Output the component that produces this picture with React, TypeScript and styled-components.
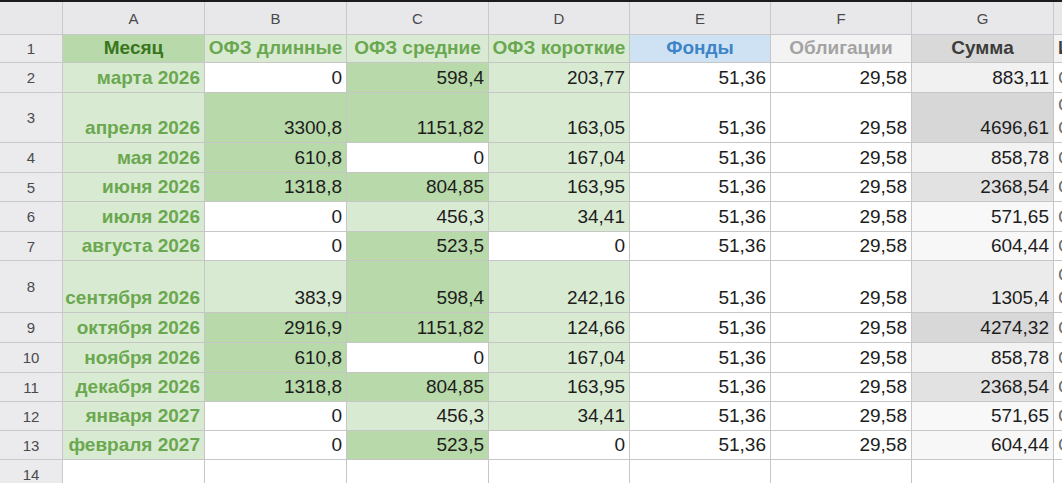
import React from "react";
import styled, { createGlobalStyle, css } from "styled-components";

const GlobalStyle = createGlobalStyle`
  html, body {
    margin: 0;
    padding: 0;
    background: #ffffff;
    overflow: hidden;
    font-family: "Liberation Sans", Arial, sans-serif;
  }
`;

// widths of columns A..H, heights of the header strip and rows 1..14
const COL_WIDTHS = [142, 142, 142, 141, 141, 141, 142, 141];
const ROW_HEIGHTS = [33, 28, 30, 50, 30, 29, 30, 29, 52, 30, 30, 29, 29, 29, 30];
const LETTERS = ["A", "B", "C", "D", "E", "F", "G", "H"];

const GREEN_LIGHT = "#d9ead3";
const GREEN_DARK = "#b8d9aa";

type Header = { text: string; bg: string; color: string };

const headers: Header[] = [
  { text: "Месяц", bg: GREEN_DARK, color: "#38761d" },
  { text: "ОФЗ длинные", bg: GREEN_LIGHT, color: "#6aa84f" },
  { text: "ОФЗ средние", bg: GREEN_LIGHT, color: "#6aa84f" },
  { text: "ОФЗ короткие", bg: GREEN_LIGHT, color: "#6aa84f" },
  { text: "Фонды", bg: "#cfe2f3", color: "#3d85c6" },
  { text: "Облигации", bg: "#f3f3f3", color: "#a3a3a3" },
  { text: "Сумма", bg: "#d9d9d9", color: "#3c3c3c" },
  { text: "Итого", bg: "#f3f3f3", color: "#3c3c3c" },
];

type Row = [string, number, number, number, number, number, number, string];

const rows: Row[] = [
  ["марта 2026", 0, 598.4, 203.77, 51.36, 29.58, 883.11, "Остаток"],
  ["апреля 2026", 3300.8, 1151.82, 163.05, 51.36, 29.58, 4696.61, "Облигации ОФЗ"],
  ["мая 2026", 610.8, 0, 167.04, 51.36, 29.58, 858.78, "Остаток"],
  ["июня 2026", 1318.8, 804.85, 163.95, 51.36, 29.58, 2368.54, "Остаток"],
  ["июля 2026", 0, 456.3, 34.41, 51.36, 29.58, 571.65, "Остаток"],
  ["августа 2026", 0, 523.5, 0, 51.36, 29.58, 604.44, "Остаток"],
  ["сентября 2026", 383.9, 598.4, 242.16, 51.36, 29.58, 1305.4, "Облигации ОФЗ"],
  ["октября 2026", 2916.9, 1151.82, 124.66, 51.36, 29.58, 4274.32, "Остаток"],
  ["ноября 2026", 610.8, 0, 167.04, 51.36, 29.58, 858.78, "Остаток"],
  ["декабря 2026", 1318.8, 804.85, 163.95, 51.36, 29.58, 2368.54, "Остаток"],
  ["января 2027", 0, 456.3, 34.41, 51.36, 29.58, 571.65, "Остаток"],
  ["февраля 2027", 0, 523.5, 0, 51.36, 29.58, 604.44, "Остаток"],
];

const fmt = (v: number) => String(v).replace(".", ",");

const greenFor = (v: number) => (v === 0 ? "#ffffff" : v < 500 ? GREEN_LIGHT : GREEN_DARK);

// grey colour scale of the sum column
const greyFor = (v: number) => {
  const g = Math.round(248 - 15.7 * Math.log(v / 571.65));
  return `rgb(${g}, ${g}, ${g})`;
};

export default function App() {
  return (
    <>
      <GlobalStyle />
      <TopBar />
      <Sheet>
        <Corner />
        {LETTERS.map((l) => (
          <ColHead key={l}>{l}</ColHead>
        ))}

        <RowHead>1</RowHead>
        {headers.map((h, i) => (
          <Cell key={h.text} $bg={h.bg} $color={h.color} $bold $align={i === 7 ? "left" : "center"}>
            {h.text}
          </Cell>
        ))}

        {rows.map((r, ri) => (
          <React.Fragment key={ri}>
            <RowHead>{ri + 2}</RowHead>
            <Cell $bg={GREEN_LIGHT} $color="#6aa84f" $bold>
              {r[0]}
            </Cell>
            <Cell $bg={greenFor(r[1])}>{fmt(r[1])}</Cell>
            <Cell $bg={greenFor(r[2])}>{fmt(r[2])}</Cell>
            <Cell $bg={greenFor(r[3])}>{fmt(r[3])}</Cell>
            <Cell>{fmt(r[4])}</Cell>
            <Cell>{fmt(r[5])}</Cell>
            <Cell $bg={greyFor(r[6])}>{fmt(r[6])}</Cell>
            <Cell $color="#6f6f6f" $align="left" $wrap>
              {r[7]}
            </Cell>
          </React.Fragment>
        ))}

        <RowHead>14</RowHead>
        {LETTERS.map((l) => (
          <Cell key={l} />
        ))}
      </Sheet>
    </>
  );
}

const TopBar = styled.div`
  height: 2px;
  background: #1c1c1e;
`;

const Sheet = styled.div`
  display: grid;
  grid-template-columns: 63px ${COL_WIDTHS.map((w) => `${w}px`).join(" ")};
  grid-template-rows: ${ROW_HEIGHTS.map((h) => `${h}px`).join(" ")};
  width: max-content;
`;

const headBase = css`
  box-sizing: border-box;
  background: #e8e8eb;
  color: #4a4a4d;
  font-size: 15px;
  display: flex;
  align-items: center;
  justify-content: center;
  border-right: 1px solid #c9c9cd;
  border-bottom: 1px solid #c9c9cd;
`;

const Corner = styled.div`
  ${headBase};
`;

const ColHead = styled.div`
  ${headBase};
`;

const RowHead = styled.div`
  ${headBase};
  background: #ebebee;
`;

const Cell = styled.div<{
  $bg?: string;
  $color?: string;
  $bold?: boolean;
  $align?: "left" | "center" | "right";
  $wrap?: boolean;
}>`
  box-sizing: border-box;
  overflow: hidden;
  display: flex;
  align-items: flex-end;
  justify-content: ${(p) =>
    p.$align === "left" ? "flex-start" : p.$align === "center" ? "center" : "flex-end"};
  padding: 0 4px 3px 4px;
  background: ${(p) => p.$bg || "#ffffff"};
  color: ${(p) => p.$color || "#1d1d1d"};
  font-size: 19px;
  line-height: 23px;
  font-weight: ${(p) => (p.$bold ? 700 : 400)};
  white-space: ${(p) => (p.$wrap ? "normal" : "nowrap")};
  border-right: 1px solid #c6c6c6;
  border-bottom: 1px solid #c6c6c6;
`;
